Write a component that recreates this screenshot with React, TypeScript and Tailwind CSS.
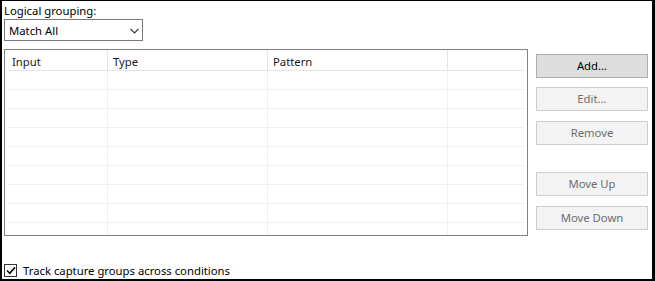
import React from "react";

const font = { fontFamily: '"Noto Sans", "Open Sans", Arial, sans-serif' };

const buttons = [
  { label: "Add...", primary: true, mt: "mt-[5px]" },
  { label: "Edit...", mt: "mt-[9px]" },
  { label: "Remove", mt: "mt-[10px]" },
  { label: "Move Up", mt: "mt-[27px]" },
  { label: "Move Down", mt: "mt-[10px]" },
];

function Row() {
  return (
    <div className="flex h-[19px] shrink-0 border-b border-[#efefef]">
      <div className="w-[101px] border-r border-[#efefef]" />
      <div className="w-[160px] border-r border-[#efefef]" />
      <div className="w-[180px] border-r border-[#efefef]" />
      <div className="flex-1" />
    </div>
  );
}

export default function App() {
  return (
    <div
      style={font}
      className="w-[655px] h-[281px] bg-white border-black border-t border-l-2 border-r-[3px] border-b-2 overflow-hidden text-[11.3px] text-black"
    >
      <div className="pl-[2px]">
        <div className="h-[17px] pt-[1px] leading-[17px]">Logical grouping:</div>
        <div className="mt-[1px] w-[139px] h-[22px] border border-[#7a7a7a] bg-white flex items-center justify-between pl-[4px] pr-[3px] pt-[2px]">
          <span className="leading-none">Match All</span>
          <svg width="9" height="6" viewBox="0 0 9 6" fill="none" className="-mt-[1px]">
            <path d="M0.5 0.8 L4.5 4.8 L8.5 0.8" stroke="#333" strokeWidth="1.2" />
          </svg>
        </div>

        <div className="mt-[8px] flex">
          {/* list view */}
          <div className="w-[524px] h-[187px] border border-[#828282] bg-white px-[2px] overflow-hidden flex flex-col">
            <div className="flex h-[21px] shrink-0 border-b border-[#e5e5e5] text-[#1a1a1a]">
              <div className="w-[101px] border-r border-[#e5e5e5] pl-[5px] pt-[2px] leading-[19px]">Input</div>
              <div className="w-[160px] border-r border-[#e5e5e5] pl-[5px] pt-[2px] leading-[19px]">Type</div>
              <div className="w-[180px] border-r border-[#e5e5e5] pl-[5px] pt-[2px] leading-[19px]">Pattern</div>
              <div className="flex-1" />
            </div>
            {Array.from({ length: 9 }).map((_, i) => (
              <Row key={i} />
            ))}
          </div>

          {/* buttons */}
          <div className="ml-[8px] flex flex-col w-[112px]">
            {buttons.map((b) => (
              <div
                key={b.label}
                className={`${b.mt} h-[24px] flex items-center justify-center border ${
                  b.primary
                    ? "bg-[#dddddd] border-[#adadad] text-black"
                    : "bg-[#f3f3f3] border-[#cdcdcd] text-[#6d6d6d]"
                }`}
              >
                {b.label}
              </div>
            ))}
          </div>
        </div>

        <div className="mt-[28px] flex items-center gap-[6px]">
          <div className="w-[13px] h-[13px] border border-[#333] bg-white flex items-center justify-center">
            <svg width="10" height="9" viewBox="0 0 10 9" fill="none">
              <path d="M1 4.5 L3.8 7.3 L9 1.3" stroke="#000" strokeWidth="1.6" />
            </svg>
          </div>
          <span className="leading-none">Track capture groups across conditions</span>
        </div>
      </div>
    </div>
  );
}
